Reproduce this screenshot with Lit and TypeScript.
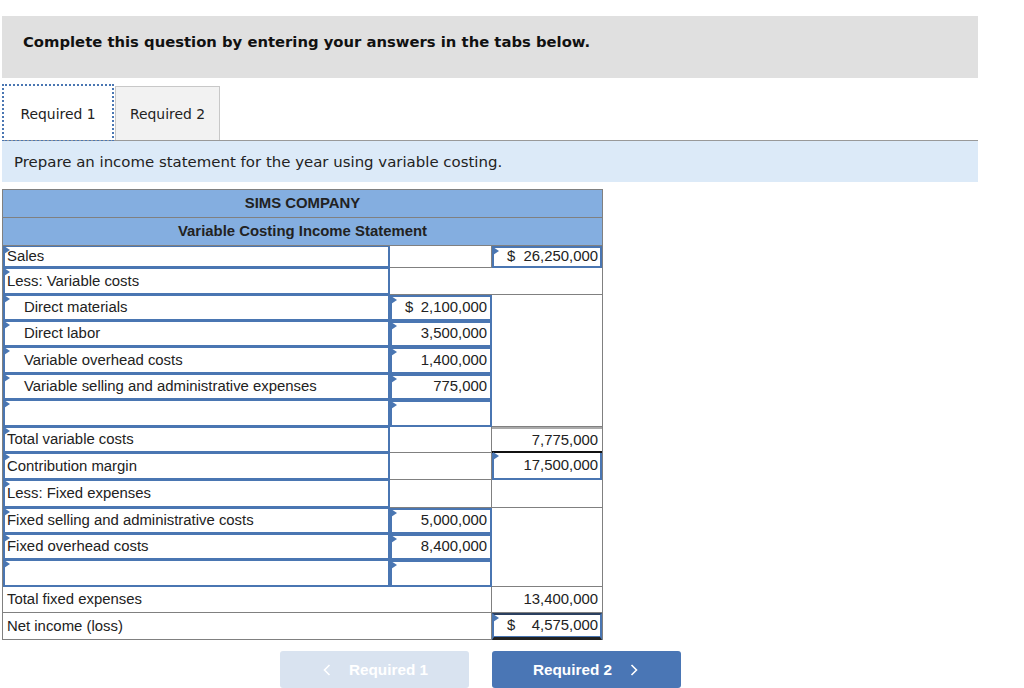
import { LitElement, html, css } from "lit";
import { customElement } from "lit/decorators.js";

type Row = {
  label: string;
  indent?: boolean;
  labelIn?: boolean;
  labelWide?: boolean;
  mid?: string;
  midIn?: boolean;
  midWide?: boolean;
  midCls?: string;
  right?: string;
  rightIn?: boolean;
  rightCls?: string;
  noRight?: boolean;
};

const rows: Row[] = [
  { label: "Sales", labelIn: true, right: "26,250,000", rightIn: true },
  { label: "Less: Variable costs", labelIn: true, midWide: true, noRight: true },
  { label: "Direct materials", indent: true, labelIn: true, mid: "2,100,000", midIn: true, rightCls: "span5" },
  { label: "Direct labor", indent: true, labelIn: true, mid: "3,500,000", midIn: true, noRight: true },
  { label: "Variable overhead costs", indent: true, labelIn: true, mid: "1,400,000", midIn: true, noRight: true },
  { label: "Variable selling and administrative expenses", indent: true, labelIn: true, mid: "775,000", midIn: true, noRight: true },
  { label: "", labelIn: true, mid: "", midIn: true, midCls: "sum-mid", noRight: true },
  { label: "Total variable costs", labelIn: true, right: "7,775,000", rightCls: "sum-right" },
  { label: "Contribution margin", labelIn: true, right: "17,500,000", rightIn: true, rightCls: "no-top" },
  { label: "Less: Fixed expenses", labelIn: true },
  { label: "Fixed selling and administrative costs", labelIn: true, mid: "5,000,000", midIn: true, rightCls: "span3" },
  { label: "Fixed overhead costs", labelIn: true, mid: "8,400,000", midIn: true, noRight: true },
  { label: "", labelIn: true, mid: "", midIn: true, noRight: true },
  { label: "Total fixed expenses", labelWide: true, right: "13,400,000" },
  { label: "Net income (loss)", labelWide: true, right: "4,575,000", rightIn: true, rightCls: "net" },
];

const dollars = new Set(["26,250,000", "2,100,000", "4,575,000"]);

@customElement("app-root")
export class AppRoot extends LitElement {
  static styles = css`
    :host {
      display: block;
      width: 1024px;
      height: 688px;
      overflow: hidden;
      background: #fff;
      color: #222;
      font-family: "Liberation Sans", Arial, sans-serif;
    }
    .page {
      display: flex;
      flex-direction: column;
      padding: 16px 46px 0 2px;
    }
    .banner {
      height: 62px;
      background: #e0e0e0;
      padding: 0 21px 12px;
      display: flex;
      align-items: center;
      box-sizing: border-box;
      font-family: "DejaVu Sans", Verdana, sans-serif;
      font-weight: 700;
      font-size: 14.8px;
      color: #111;
    }
    .tabs {
      display: flex;
      margin-top: 8px;
      height: 55px;
      padding-left: 2px;
      border-bottom: 1px solid #999;
      box-sizing: border-box;
      font-family: "DejaVu Sans", Verdana, sans-serif;
      font-size: 13.9px;
    }
    .tab {
      display: flex;
      align-items: center;
      justify-content: center;
      box-sizing: border-box;
      color: #222;
    }
    .tab.on {
      width: 108px;
      padding-top: 1px;
      background: #fff;
      outline: 2px dotted #4a76b2;
    }
    .tab.off {
      width: 105px;
      background: #f2f2f2;
      border: 1px solid #c8c8c8;
      border-bottom: none;
      margin-left: 3px;
    }
    .prompt {
      height: 41px;
      box-sizing: border-box;
      padding: 1px 0 0 12px;
      background: #dceaf8;
      display: flex;
      align-items: center;
      font-family: "DejaVu Sans", Verdana, sans-serif;
      font-size: 14.95px;
      color: #222;
    }
    .sheet {
      margin-top: 7px;
      width: 601px;
      box-sizing: border-box;
      border: 1px solid #808080;
      border-bottom: none;
      display: grid;
      grid-template-columns: 387px 102px 110px;
      grid-template-rows: 28px 28px 22px 27px 26px 26px 27px 26px 27px 26px 27px 28px 26px 26px 27px 26px 27px;
      font-size: 14.9px;
    }
    .head {
      grid-column: 1 / 4;
      box-sizing: border-box;
      padding-bottom: 1px;
      background: #84aee0;
      border-bottom: 1px solid #808080;
      display: flex;
      align-items: center;
      justify-content: center;
      font-weight: 700;
      color: #222;
    }
    .cell {
      position: relative;
      box-sizing: border-box;
      border-bottom: 1px solid #808080;
      border-right: 1px solid #808080;
      display: flex;
      align-items: center;
      padding: 0 3px 1px 4px;
      white-space: nowrap;
      background: #fff;
    }
    .cell.last {
      border-right: none;
      padding-right: 4px;
    }
    .cell.label.wide,
    .cell.mid.wide {
      grid-column: span 2;
    }
    .cell.indent {
      padding-left: 21px;
    }
    .cell.num {
      justify-content: flex-end;
    }
    .cell.input {
      border: 2px solid #4a76b2;
      padding-left: 3px;
      padding-right: 3px;
    }
    .cell.num.input {
      padding-bottom: 2px;
    }
    .cell.last.input {
      padding-right: 2px;
    }
    .cell.label.input {
      border-width: 1px 2px 2px 2px;
      border-color: #4a76b2;
      box-shadow: 0 1px 0 #7f8fa6;
      padding-left: 2px;
    }
    .cell.label.indent.input {
      padding-left: 19px;
    }
    .cell.input::before {
      content: "";
      position: absolute;
      left: -1px;
      top: -1px;
      border-left: 6px solid #4a76b2;
      border-top: 4px solid transparent;
      border-bottom: 4px solid transparent;
    }
    .dollar {
      margin-right: auto;
      padding-left: 10px;
    }
    .span5 {
      grid-row: span 5;
    }
    .span3 {
      grid-row: span 3;
    }
    .sum-mid {
      box-shadow: 0 1px 0 #222;
    }
    .sum-right {
      border-top: 2px solid #aaa;
      border-bottom: 2px solid #111;
    }
    .cell.num.no-top {
      border-top: none;
      padding-bottom: 1px;
    }
    .cell.net {
      border-top: 2px solid #2a3f5f;
      border-bottom: 3px solid #222;
      box-shadow: inset 0 -1px 0 #4a76b2;
    }
    .nav {
      position: absolute;
      top: 651px;
      left: 280px;
      display: flex;
      gap: 23px;
    }
    .btn {
      width: 189px;
      height: 37px;
      box-sizing: border-box;
      border-radius: 3px;
      display: flex;
      align-items: center;
      justify-content: center;
      gap: 18px;
      color: #fff;
      font-weight: 700;
      font-size: 15.3px;
    }
    .btn.prev {
      padding-left: 2px;
      background: #d9e3f0;
    }
    .btn.next {
      padding-right: 2px;
      background: #4a76b5;
    }
    .btn svg {
      width: 8px;
      height: 12px;
      fill: none;
      stroke: #fff;
      stroke-width: 1.6;
    }
  `;

  numCell(text: string | undefined, input: boolean | undefined, cls: string) {
    const hasDollar = text ? dollars.has(text) : false;
    return html`<div class="cell num ${input ? "input" : ""} ${cls}">
      ${hasDollar ? html`<span class="dollar">$</span>` : ""}${text}
    </div>`;
  }

  render() {
    return html`
      <div class="page">
        <div class="banner">Complete this question by entering your answers in the tabs below.</div>
        <div class="tabs">
          <div class="tab on">Required 1</div>
          <div class="tab off">Required 2</div>
        </div>
        <div class="prompt">Prepare an income statement for the year using variable costing.</div>
        <div class="sheet">
          <div class="head">SIMS COMPANY</div>
          <div class="head">Variable Costing Income Statement</div>
          ${rows.map(
            (r) => html`
              <div class="cell label ${r.indent ? "indent" : ""} ${r.labelIn ? "input" : ""} ${r.labelWide ? "wide" : ""}">${r.label}</div>
              ${r.labelWide ? "" : this.numCell(r.mid, r.midIn, `mid ${r.midWide ? "wide last" : ""} ${r.midCls ?? ""}`)}
              ${r.noRight ? "" : this.numCell(r.right, r.rightIn, `last ${r.rightCls ?? ""}`)}
            `
          )}
        </div>
        <div class="nav">
          <div class="btn prev">
            <svg viewBox="0 0 8 12"><path d="M6.5 1 1.5 6l5 5"></path></svg>
            Required 1
          </div>
          <div class="btn next">
            Required 2
            <svg viewBox="0 0 8 12"><path d="M1.5 1l5 5-5 5"></path></svg>
          </div>
        </div>
      </div>
    `;
  }
}
